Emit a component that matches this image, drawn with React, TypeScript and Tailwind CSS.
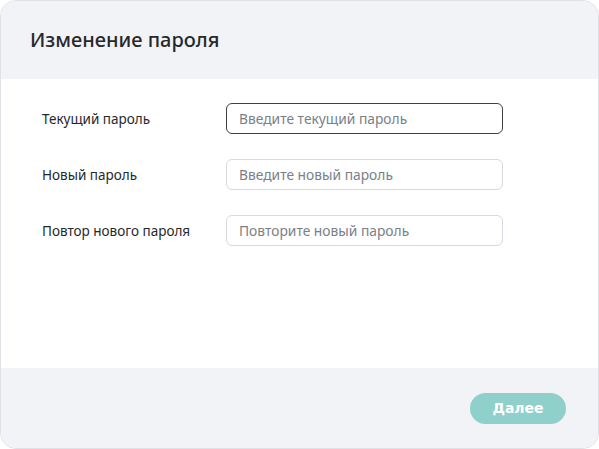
import React from 'react';

const fields = [
  { label: 'Текущий пароль', placeholder: 'Введите текущий пароль', focused: true },
  { label: 'Новый пароль', placeholder: 'Введите новый пароль', focused: false },
  { label: 'Повтор нового пароля', placeholder: 'Повторите новый пароль', focused: false },
];

const App = () => {
  return (
    <div className="w-[599px] h-[449px] bg-white font-['Noto_Sans',sans-serif]">
      <div className="h-full flex flex-col rounded-[16px] border border-[#dfe1e6] overflow-hidden">
        <div className="h-[78px] shrink-0 bg-[#f2f3f7] flex items-center px-[29px]">
          <h1 className="text-[20px] font-medium text-[#26282c] leading-none">Изменение пароля</h1>
        </div>

        <div className="flex-1 bg-white pt-[24px] pl-[41px] flex flex-col gap-[25px]">
          {fields.map((f) => (
            <div key={f.label} className="flex items-center">
              <label className="w-[184px] text-[13.5px] text-[#26282c] pt-[2px]">{f.label}</label>
              <input
                type="password"
                placeholder={f.placeholder}
                className={
                  f.focused
                    ? 'w-[277px] h-[31px] rounded-[6px] border border-[#3d4045] px-[12px] text-[13.8px] outline-none placeholder:text-[#7b8088]'
                    : 'w-[277px] h-[31px] rounded-[6px] border border-[#d6dae0] px-[12px] text-[13.8px] outline-none placeholder:text-[#7b8088]'
                }
              />
            </div>
          ))}
        </div>

        <div className="h-[80px] shrink-0 bg-[#f2f3f7] flex items-center justify-end pr-[32px]">
          <button className="w-[96px] h-[31px] rounded-full bg-[#8fd0cb] text-white text-[14px] font-bold font-['DejaVu_Sans',sans-serif]">
            Далее
          </button>
        </div>
      </div>
    </div>
  );
};

export default App;
